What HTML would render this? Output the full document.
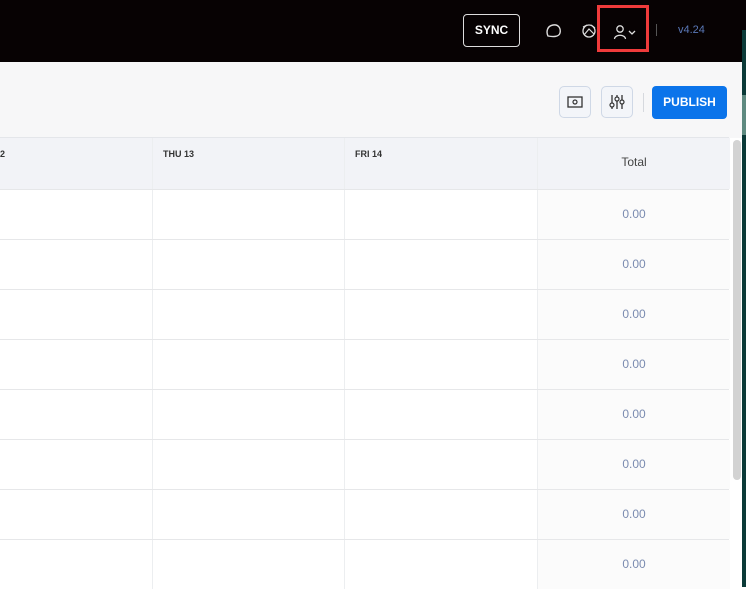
<!DOCTYPE html>
<html><head><style>
body{margin:0;width:746px;height:587px;overflow:hidden;background:#fff;font-family:"Liberation Sans",sans-serif;position:relative}
.top{position:absolute;left:0;top:0;width:746px;height:62px;background:#070203}
.strip{position:absolute;left:742px;top:30px;width:4px;height:557px;background:#0b3a38}
.strip2{position:absolute;left:742px;top:95px;width:4px;height:40px;background:#5f8a80}
.sync{position:absolute;left:463px;top:14px;width:55px;height:31px;border:1px solid #ddd;border-radius:4px;color:#fff;font-weight:bold;font-size:12px;line-height:31px;text-align:center}
.hl{position:absolute;left:597px;top:5px;width:52px;height:47px;border:3px solid #ef3b3b;box-sizing:border-box}
.ver{position:absolute;left:678px;top:24px;color:#5a78b8;font-size:11px}
.tool{position:absolute;left:0;top:62px;width:742px;height:76px;background:#f7f7f8}
.btn{position:absolute;top:86px;width:32px;height:32px;border:1px solid #cfd8e6;border-radius:5px;background:#f3f5f9;box-sizing:border-box}
.pub{position:absolute;left:652px;top:86px;width:75px;height:33px;background:#0b74ea;border-radius:4px;color:#fff;font-weight:bold;font-size:12px;line-height:33px;text-align:center}
.grid{position:absolute;left:0;top:137px;width:729px}
.hdr{height:51px;background:#f2f3f7;border-top:1px solid #e4e6ea;position:relative}
.row{height:49px;border-top:1px solid #e6e7e9;position:relative}
.c{position:absolute;top:0;bottom:0;border-left:1px solid #eceef0}
.tot{position:absolute;left:537px;top:0;bottom:0;width:192px;background:#fbfbfb;border-left:1px solid #eceef0;text-align:center;color:#7a8bb0;font-size:12px;line-height:48px}
.hdr .tot{background:#f2f3f7;color:#444;font-size:12px;line-height:48px}
.d{position:absolute;top:11px;font-size:9px;font-weight:bold;color:#333}
.sb{position:absolute;left:733px;top:140px;width:8px;height:340px;background:#d3d3d3;border-radius:4px}
</style></head><body>
<div class="top"></div>
<div class="strip"></div><div class="strip2"></div>
<div class="sync">SYNC</div>
<svg style="position:absolute;left:545px;top:23px" width="18" height="16" viewBox="0 0 18 16"><path d="M3 13 C1 9 2 3 8 2 C14 1 16 6 15 10 C14 14 8 14 3 13Z" fill="none" stroke="#ddd" stroke-width="1.4"/></svg>
<svg style="position:absolute;left:581px;top:23px" width="16" height="16" viewBox="0 0 16 16"><circle cx="8" cy="8" r="6" fill="none" stroke="#ddd" stroke-width="1.3"/><path d="M2 4 L6 2 M10 2 L14 5 M3 12 L8 6 L13 11" fill="none" stroke="#ddd" stroke-width="1.2"/></svg>
<div class="hl"></div>
<svg style="position:absolute;left:613px;top:24px" width="26" height="16" viewBox="0 0 26 16"><circle cx="7" cy="5" r="3.2" fill="none" stroke="#ddd" stroke-width="1.3"/><path d="M1.5 15 C2 10 12 10 12.5 15" fill="none" stroke="#ddd" stroke-width="1.3"/><path d="M16 7 L19 10 L22 7" fill="none" stroke="#ddd" stroke-width="1.3"/></svg>
<div style="position:absolute;left:656px;top:24px;width:1px;height:12px;background:#555"></div>
<div class="ver">v4.24</div>
<div class="tool"></div>
<div class="btn" style="left:559px"><svg width="30" height="30" viewBox="0 0 30 30"><rect x="8" y="10" width="14" height="10" fill="none" stroke="#333" stroke-width="1.3"/><circle cx="15" cy="15" r="2" fill="none" stroke="#333" stroke-width="1.2"/></svg></div>
<div class="btn" style="left:601px"><svg width="30" height="30" viewBox="0 0 30 30"><path d="M10 8V22M15 8V22M20 8V22" stroke="#333" stroke-width="1.3"/><circle cx="10" cy="18" r="2" fill="#f3f5f9" stroke="#333" stroke-width="1.2"/><circle cx="15" cy="12" r="2" fill="#f3f5f9" stroke="#333" stroke-width="1.2"/><circle cx="20" cy="15" r="2" fill="#f3f5f9" stroke="#333" stroke-width="1.2"/></svg></div>
<div style="position:absolute;left:643px;top:93px;width:1px;height:19px;background:#d6d9de"></div>
<div class="pub">PUBLISH</div>
<div class="grid">
<div class="hdr"><span class="d" style="left:0">2</span><div class="c" style="left:152px"></div><span class="d" style="left:163px">THU 13</span><div class="c" style="left:344px"></div><span class="d" style="left:355px">FRI 14</span><div class="tot">Total</div></div>
<div class="row"><div class="c" style="left:152px"></div><div class="c" style="left:344px"></div><div class="tot">0.00</div></div>
<div class="row"><div class="c" style="left:152px"></div><div class="c" style="left:344px"></div><div class="tot">0.00</div></div>
<div class="row"><div class="c" style="left:152px"></div><div class="c" style="left:344px"></div><div class="tot">0.00</div></div>
<div class="row"><div class="c" style="left:152px"></div><div class="c" style="left:344px"></div><div class="tot">0.00</div></div>
<div class="row"><div class="c" style="left:152px"></div><div class="c" style="left:344px"></div><div class="tot">0.00</div></div>
<div class="row"><div class="c" style="left:152px"></div><div class="c" style="left:344px"></div><div class="tot">0.00</div></div>
<div class="row"><div class="c" style="left:152px"></div><div class="c" style="left:344px"></div><div class="tot">0.00</div></div>
<div class="row"><div class="c" style="left:152px"></div><div class="c" style="left:344px"></div><div class="tot">0.00</div></div>
</div>
<div class="sb"></div>
</body></html>
